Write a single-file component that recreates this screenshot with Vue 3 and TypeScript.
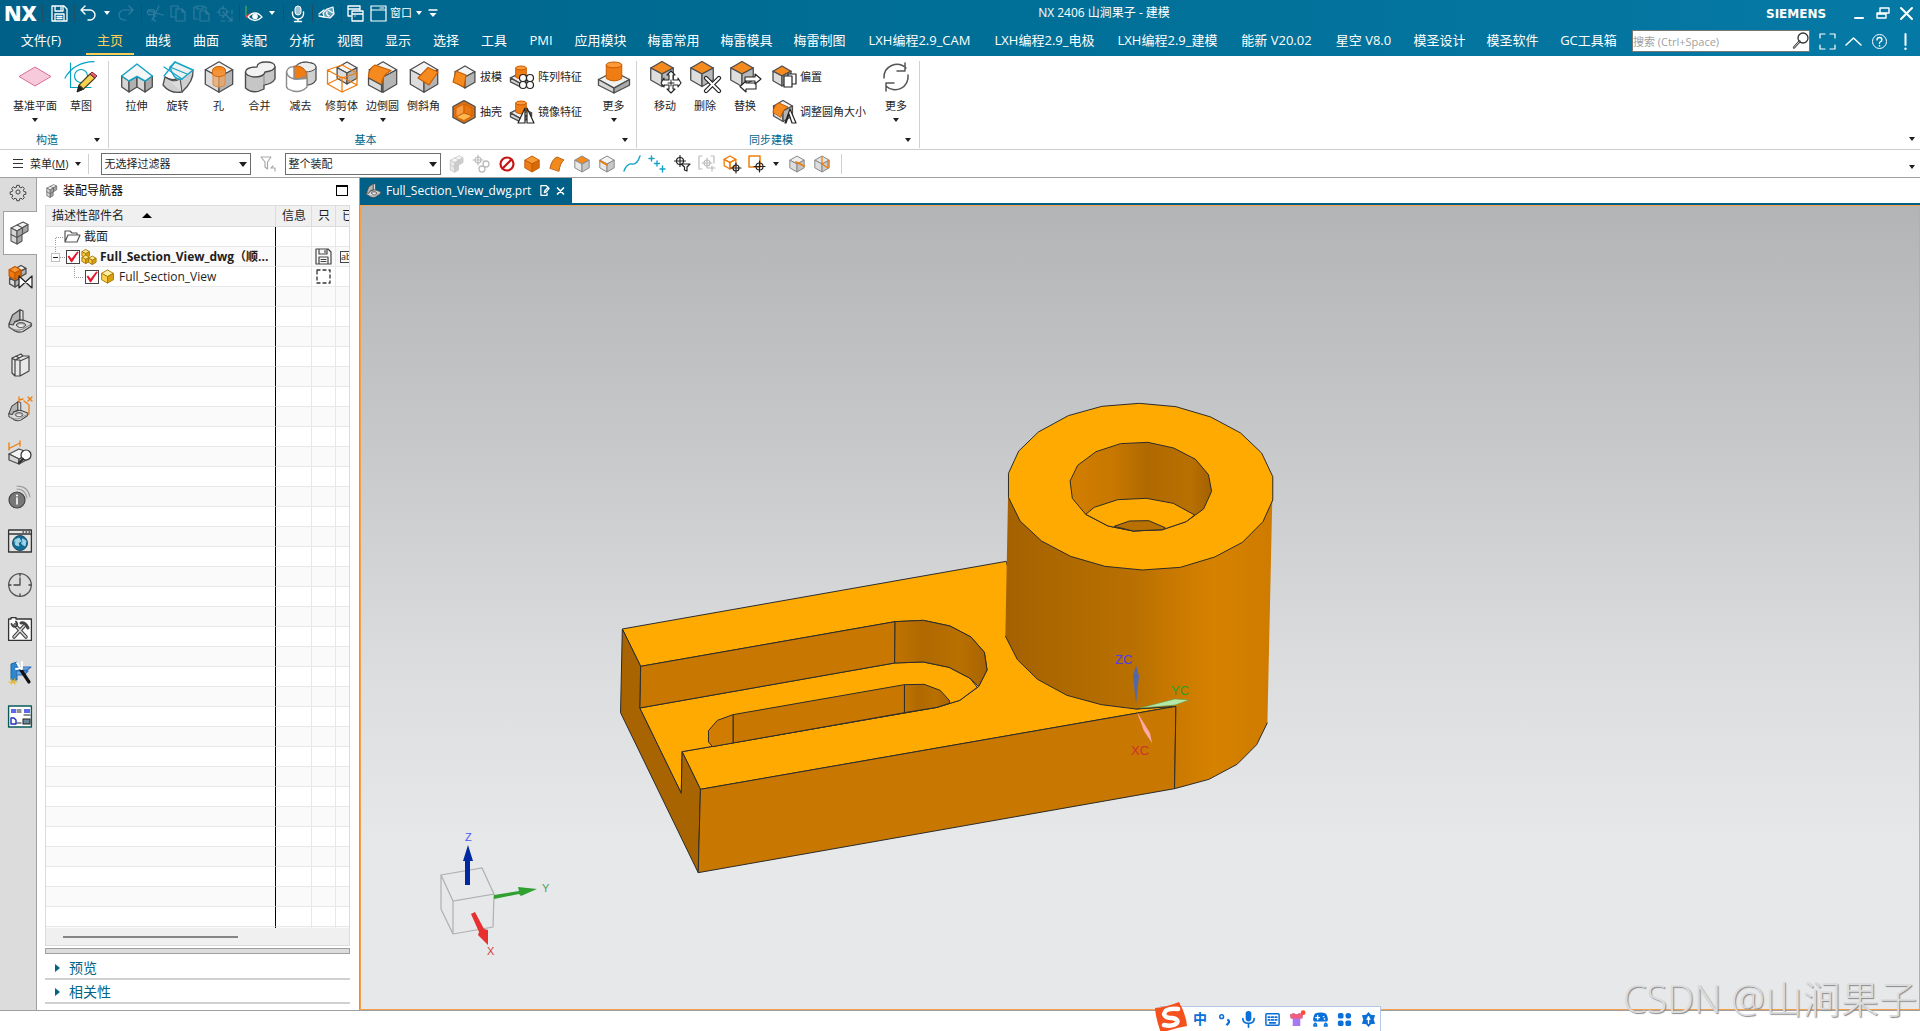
<script setup lang="ts">
import { ref } from 'vue'

/* ---------- icon drawing helpers ---------- */
const INK = '#4d4d4d'
const ORANGE = '#f58a1f'
const poly = (pts: string, fill: string, stroke = INK, w = 1.3) =>
  `<polygon points="${pts}" fill="${fill}" stroke="${stroke}" stroke-width="${w}" stroke-linejoin="round"/>`
const line = (d: string, stroke = INK, w = 1.3, fill = 'none', extra = '') =>
  `<path d="${d}" fill="${fill}" stroke="${stroke}" stroke-width="${w}" stroke-linejoin="round" stroke-linecap="round" ${extra}/>`
const cube = (
  cx: number, cy: number, r: number,
  top = '#f4f4f4', left = '#dcdcdc', right = '#b4b4b4', stroke = INK, w = 1.3
) => {
  const h = r * 0.9
  const q = r * 0.48
  return (
    poly(`${cx},${cy - r} ${cx + h},${cy - q} ${cx},${cy} ${cx - h},${cy - q}`, top, stroke, w) +
    poly(`${cx - h},${cy - q} ${cx},${cy} ${cx},${cy + r} ${cx - h},${cy + q}`, left, stroke, w) +
    poly(`${cx + h},${cy - q} ${cx},${cy} ${cx},${cy + r} ${cx + h},${cy + q}`, right, stroke, w)
  )
}
const topCube = (cx: number, cy: number, r: number) => cube(cx, cy, r, ORANGE, '#dedede', '#b8b8b8')
const boss = (cx: number, y: number, s: number) =>
  poly(`${cx - 16 * s},${y + 18 * s} ${cx},${y + 10 * s} ${cx + 16 * s},${y + 18 * s} ${cx},${y + 27 * s}`, '#f0f0f0') +
  poly(`${cx - 16 * s},${y + 18 * s} ${cx},${y + 27 * s} ${cx},${y + 32 * s} ${cx - 16 * s},${y + 24 * s}`, '#d8d8d8') +
  poly(`${cx + 16 * s},${y + 18 * s} ${cx},${y + 27 * s} ${cx},${y + 32 * s} ${cx + 16 * s},${y + 24 * s}`, '#aaaaaa') +
  line(`M${cx - 8 * s} ${y + 3 * s}V${y + 17 * s}Q${cx} ${y + 22 * s} ${cx + 8 * s} ${y + 17 * s}V${y + 3 * s}`, '#c85c00', 1, '#f07d14') +
  `<ellipse cx="${cx}" cy="${y + 3 * s}" rx="${8 * s}" ry="${3 * s}" fill="#ff9a3a" stroke="#c85c00"/>`
const target = (cx: number, cy: number, c = '#222', r = 3.5) =>
  `<circle cx="${cx}" cy="${cy}" r="${r}" fill="none" stroke="${c}" stroke-width="1.2"/>` +
  line(`M${cx - r - 2} ${cy}H${cx + r + 2}M${cx} ${cy - r - 2}V${cy + r + 2}`, c, 1.2)
/* L-shaped bracket: upright plate on a rounded base with a bore */
const bracket =
  line('M1 15L14 10.500L23 14Q24.500 16 22 18L15 22.500Q11 24 7 22L1 18Z', '#444', 1.2, '#dadada') +
  line('M1 18.500Q8 23 15 20L23.500 15', '#777', 0.9) +
  line('M1 15L4.500 6L12 .8V10.500L7 12.500L5 16Z', '#444', 1.2, '#b4b4b4') +
  line('M12 .8L15 2V11.500L12 10.500Z', '#444', 1.1, '#e4e4e4') +
  '<ellipse cx="13" cy="16" rx="4.500" ry="2.300" fill="#b8b8b8" stroke="#444"/><ellipse cx="13" cy="16.800" rx="2.600" ry="1.200" fill="#eee"/>'
/* three joined blocks in an L */
const blocks = (s: string) =>
  poly('3,7 15,1 20,3.500 9,10', '#f2f2f2', s, 1.1) + poly('3,7 9,10 9,23 3,20', '#d6d6d6', s, 1.1) +
  poly('9,10 20,3.500 20,10 14,13.500 14,20 9,23', '#a6a6a6', s, 1.1) + line('M9 4L14.500 6.700V13M3 13.500L9 16.500L14 13.500', s, 1.1)

const W = '#fff'
const DIM = '#2f7c9e'
const icons: Record<string, string> = {
  save: line('M1 1H13L16 4V16H1ZM4 1V6H12V1M4 16V9H13V16M6 11.5H11M6 13.5H11M10 2.5V4.5', W),
  undo: line('M5 1L1 5L5 9M1 5H10A5 5 0 0 1 10 15H8', W, 1.4),
  redo: line('M11 1L15 5L11 9M15 5H6A5 5 0 0 0 6 15H8', DIM, 1.2),
  cut: line('M2 6L16 10M5 15L12 1M4 5A2.5 2.5 0 1 0 4 9.5A2.5 2.5 0 1 0 4 5M9 11A2.5 2.5 0 1 0 9 16', DIM, 1.2),
  copy: line('M5 12H1V1H8V4M6 4H12L15 7V16H6ZM12 4V7H15', DIM, 1.2),
  paste: line('M5 14H1V2H4M10 2H13V5M4 1H10V4H4ZM7 6H13L16 9V16H7ZM13 6V9H16', DIM, 1.2),
  place: line('M7 1V4M7 10V13M1 7H4M10 7H13M3 7A4 4 0 1 0 11 7A4 4 0 1 0 3 7M7 7L16 16M12 16H16V12M9 16H5M16 9V5', DIM, 1.2),
  eye: line('M1 1V11', '#4caf50', 1.2) + line('M1 12L5 9', '#e53935', 1.6) +
    line('M3 12Q10 4 17 12Q10 19 3 12Z', W, 1.3) + '<circle cx="10" cy="11.5" r="2.8" fill="#fff"/>',
  mic: '<rect x="6" y="1" width="6" height="9" rx="3" fill="#9cc3d4" stroke="#fff"/>' +
    line('M3.500 7V9A5.500 5 0 0 0 14.500 9V7M9 14V16.500M5.500 16.500H12.500', W, 1.4),
  touch: line('M5 8L9 4L15 2L16 9L12 13L6 12Z', W, 1.2, '#5f9fb8') + line('M1 9L6 5M1 11L6 12M9 7Q8 10 11 11M10 5L15 8', W, 1.4),
  cascade: line('M1 1H13V5M4 11H1V1M1 4H13', W, 1.3) + line('M5 6H16V16H5ZM5 9H16M8 11H8', W, 1.3),
  frame: line('M1 1H16V16H1ZM1 5H16M10 3H14', W, 1.2),
  overflow: line('M5 5H13', W, 1.4) + '<path d="M5.500 8H12.500L9 12Z" fill="#fff"/>',
  minimize: line('M5 13H13', W, 2),
  restore: line('M6 8V3H15V8H12M3 8H12V13H3ZM3 9H12', W, 1.4),
  close: line('M3 3L14 14M14 3L3 14', W, 2),
  search: '<circle cx="11" cy="6" r="5" fill="none" stroke="#333" stroke-width="1.3"/>' + line('M7.500 9.500L2 15.500', '#333', 2.4) + line('M7 10L2 15.500', '#fff', 0.8),
  expand: line('M1 5V1H6M11 1H16V5M16 12V16H11M6 16H1V12', W, 1.2),
  up: line('M1 12L8.500 5L16 12', W, 1.5),
  help: '<circle cx="8.5" cy="8.500" r="7" fill="none" stroke="#fff"/>' + line('M6 7Q6 4.500 8.500 4.500T11 7Q11 8 8.500 9.500V10.500', W, 1.3) + '<circle cx="8.5" cy="12.8" r=".9" fill="#fff"/>',
  alert: line('M8.500 1V12', W, 2) + '<circle cx="8.5" cy="15.8" r="1.2" fill="#fff"/>',

  /* 32px ribbon icons */
  datum: poly('0,15.500 16,6 32,15.500 16,25', '#f6cadb', '#dc6c96', 1),
  sketch: line('M5.500 2V26.500H26', '#00a3c7', 1.1) + '<circle cx="16" cy="15" r="6.500" fill="none" stroke="#00a3c7" stroke-width="1.2"/>' +
    line('M0 17Q9 1 29 .6', '#00a3c7', 1.2) +
    poly('12,31 14,24 19,28', '#222', '#222', 1) + poly('14,24 25,13 30,17 18.500,28', '#f7d154', '#4a4020', 1.1) + poly('25,13 27,11 32,15 30,17', '#ef5f6b', '#7a3038', 1),
  extrude: poly('0.700,15 8,20 8,31 0.700,26', '#d6d6d6') + poly('8,20 16,15.500 16,26 8,31', '#b0b0b0') +
    poly('16,15.500 24,20 24,31 16,26', '#d6d6d6') + poly('24,20 31.300,15 31.300,26 24,31', '#a8a8a8') +
    poly('0.700,15 16,3 31.300,15 24,20 16,15.500 8,20', '#f6f6f6', '#12a5c6', 1.5),
  revolve: line('M3 16Q13 22 20 14L31 9Q32 20 20 31Q8 33 1 24Z', INK, 1.3, '#cfcfcf') + line('M3 16Q14 23 18 17L20 31', INK, 1.1, '#dcdcdc') +
    line('M8 6L13 1L31 9L20 18Q12 20 8 6Z', '#12a5c6', 1.4, '#f0f0f0') + line('M2 6L20 18M8 6L25 13M2 15L13 1', '#12a5c6', 1.3),
  hole: cube(16, 16, 15.2) + '<path d="M10 13V24Q16 28 22 24V13Z" fill="#eda663" fill-opacity=".75" stroke="#d88a45"/>' +
    '<ellipse cx="16" cy="9.500" rx="6.500" ry="4" fill="#f58a1f" stroke="#c85c00"/>' + line('M9.500 9.500V13.500Q16 18 22.500 13.500V9.500', '#d06a10', 1, '#f3933a'),
  unite: line('M1.500 11V27Q9 34 20 28V24Q28 23 31 18V6L20 11Z', INK, 1.4, '#c6c6c6') +
    line('M1.500 11Q2 6 13 6Q13 1 22 1Q31 1 31 6Q30 10 21 11Q20 16 10 16Q2 15 1.500 11Z', INK, 1.3, '#f2f2f2') + line('M20 15V24', '#8a8a8a', 1),
  subtract: line('M10 6Q16 -1 26 2Q31 3 31 7V19Q28 24 22 24L20 14Z', INK, 1.3, '#d0d0d0') + line('M10 6Q16 -1 26 2Q31 3 31 7Q28 11 20 11Z', INK, 1, '#eee') +
    line('M9 5Q20 4 22 14V24Q20 18 9 18Z', '#b85c10', 1, '#f07d14') +
    line('M1.500 11Q3 5 9 6V18Q20 18 22 17V26Q14 34 3 28L1.500 26Z', '#8c8c8c', 1.4, '#fff') + line('M1.500 11Q3 18 12 18Q20 17 22 13', '#8c8c8c', 1.3),
  trim: cube(21, 12, 11) + line('M1.500 9L16 4L31 12V24L16 31L1.500 23ZM1.500 9L16 17L31 12M16 17V31M1.500 23L16 16L31 24', '#ee7d0c', 1.3),
  blend: cube(16, 16, 15.2) + line('M1.500 15Q2 7 8 4L24 9.500Q15 14 14.500 24L1.500 17Z', '#c85c00', 1.2, ORANGE) + line('M1.500 17L14.500 24V31L1.500 24Z', INK, 1.3, '#dcdcdc'),
  chamfer: cube(16, 16, 15.2) + poly('10,17 20,6.500 30,11 21,24', ORANGE, '#c85c00', 1.2),
  boss: boss(16, 1, 0.97),
  move: topCube(13, 13, 12.5) + line('M22 10L26 14H24V19H29V17L32 22L29 26V24H24V28H26L22 32L18 28H20V24H15V26L12 22L15 17V19H20V14H18Z', '#222', 1.1, '#fff') + line('M22 19V25M19 22H25', '#222', 1),
  remove: topCube(13, 13, 12.5) + line('M17 17L30 30M30 17L17 30', '#222', 4.400) + line('M17 17L30 30M30 17L17 30', '#fff', 2),
  replace: topCube(13, 13, 12.5) + line('M16 16H26V13L32 18L26 23V20H16ZM27 22H17V20L11 25.500L17 31V28H27Z', '#222', 1.1, '#fff'),
  refresh: line('M4 17A13 13 0 0 1 26 7M25 2V10H17M28 14A13 13 0 0 1 6 25M6 30V22H14', '#555', 1.5),
  /* 24px ribbon icons */
  draft: cube(13, 12, 11) + poly('4,6 14,10 12,22 1,17', ORANGE, '#c85c00', 1.1),
  shell: poly('12,.7 23,6.500 23,17.500 12,23.300 1,17.500 1,6.500', '#dd7414', INK, 1.4) +
    poly('4,8 12,4 12,13 4,17', '#f79a40', '#c85c00', 0.8) + poly('12,4 20,8 20,16 12,13', '#e8760f', '#c85c00', 0.8) + poly('4,17 12,13 20,16 12,20.500', '#ffb84d', '#c85c00', 0.8),
  pattern: boss(11, 1, 0.66) + '<g fill="#fff" stroke="#222" stroke-width="1.2"><circle cx="13" cy="13" r="3.500"/><circle cx="20" cy="13" r="3.500"/><circle cx="13" cy="20" r="3.500"/><circle cx="20" cy="20" r="3.500"/></g>',
  mirror: boss(11, 1, 0.66) + poly('8,23 15,8 15,23', '#fff', '#222', 1.2) + poly('24,23 17,8 17,23', '#fff', '#222', 1.2),
  offset: topCube(10, 11, 10) + line('M12 11H20V22H12ZM16 11V9H24V19H20', '#222', 1.2, '#fff'),
  resize: cube(11, 11, 10.5) + line('M1 12Q2 5 7 3L16 7Q10 10 9 17Z', '#c85c00', 1, ORANGE) + line('M13 23L18 9L24 23H20L17 14L14 23Z', '#222', 1.2, '#fff'),

  /* selection bar, 18px */
  filter: line('M2 2H12L8.500 7V14L6 12V7ZM12 13H16V16M12 13L14 11', '#aaa', 1.2),
  part: '<g opacity=".55" transform="scale(.75)">' + blocks('#999') + '</g>',
  link: target(5, 5, '#bbb', 3) + '<g fill="none" stroke="#bbb" stroke-width="1.3"><circle cx="13" cy="9" r="3"/><circle cx="9" cy="14" r="3"/></g>',
  none: '<circle cx="9" cy="9" r="6.500" fill="#fff" stroke="#c81414" stroke-width="2.2"/>' + line('M4.500 13.500L13.500 4.500', '#c81414', 2.2),
  solid: cube(9, 9, 8, '#f99a33', '#f07d14', '#d96a08', '#c06010', 1),
  sheet: line('M2 13Q4 4 9 2L16 5Q12 8 11 16Z', '#c06010', 1, '#f08a1c'),
  face: cube(9, 9, 8, ORANGE, '#e8e8e8', '#c8c8c8', '#888', 1),
  edge: cube(9, 9, 8, '#f4f4f4', '#e8e8e8', '#c8c8c8', '#888', 1) + line('M2 6L9 10', '#ee7d0c', 1.8),
  curve: line('M1 16Q4 8 9 9T17 1', '#12a5c6', 1.4),
  points: line('M3.500 1V6M1 3.500H6M9 6V11M6.500 8.500H11.500M14.500 11V17M12 14H17', '#12a5c6', 1.4),
  snapf: target(7, 6, '#222', 3.5) + line('M8 9H17L14 12V16L11.500 15V12Z', '#222', 1.2, '#fff'),
  snapb: target(9, 8, '#bbb', 3) + line('M4 1H1V14H4M13 1H16V8M10 13H17M14 11V16', '#bbb', 1.2),
  boxpick: cube(7, 7.500, 6.500, 'none', 'none', 'none', '#ee7d0c', 1.3) + target(13, 13, '#222', 3),
  rectpick: line('M1 1H12V12H1Z', '#ee7d0c', 1.5) + target(11.500, 11.500, '#222', 3.5),
  mid: cube(9, 9, 8, '#eee', '#ddd', '#c4c4c4', '#888', 1) + line('M8 7L16 11', '#ee7d0c', 1.8),
  quad: cube(9, 9, 8, '#e4e4e4', '#ddd', '#ccc', '#888', 1) + line('M9 2V9L15 13V5', '#ee7d0c', 1.3),

  /* resource rail, 24px */
  gear: '<g fill="none" stroke="#444" stroke-width="1.2"><circle cx="12" cy="12" r="2.500"/><path d="M10.500 4h3l.5 2.500 1.500.6 2.100-1.400 2 2.100-1.300 2.100.6 1.500 2.500.5v2.800l-2.500.5-.6 1.500 1.300 2.100-2 2-2.100-1.300-1.500.6-.5 2.400h-3l-.5-2.400-1.500-.6-2.100 1.300-2-2 1.300-2.100-.6-1.500-2.500-.5v-2.800l2.500-.5.6-1.500-1.300-2.100 2-2.100 2.100 1.400 1.500-.6z"/></g>',
  assembly: blocks('#555'),
  constraint: cube(13, 6, 5.500) + cube(7, 16, 6) + cube(7, 8, 6.500, '#f79a3c', '#f07d14', '#d96c0a', '#c85c00') + poly('11,11 11,23 24,11 24,23', '#fff', '#222', 1.2),
  partnav: bracket,
  books: line('M4 5L13 1L15 3L21 3V18L12 23H7L4 20ZM4 5L7 7V23M7 7L15 3M12 8L21 4M12 8V23M8 3L11 5M7 7H12', '#444', 1.2, '#e8e8e8'),
  reuse: '<g transform="translate(0 4) scale(.85)">' + bracket + '</g>' + line('M11 0V5M11 3L15 2M16 4L20 7M20 0L24 4M24 0L20 4M21 8V17', '#ee7d0c', 1.3),
  measure: poly('1,13 11,8 22,12 11,18', '#f4f4f4') + poly('1,13 11,18 11,23 1,19', '#d8d8d8') + poly('22,12 11,18 11,23 22,17', '#aaa') +
    line('M1 2V9M12 0V5M2 7L12 2', '#ee7d0c', 1.3) + '<circle cx="18" cy="14" r="5" fill="#fff" stroke="#333" stroke-width="1.2"/>' + line('M15 18L11 22', '#333', 2.4),
  info: '<circle cx="9" cy="15" r="8" fill="#777" stroke="#444" stroke-width="1.2"/>' + line('M9 13V19', '#fff', 1.6) + '<circle cx="9" cy="10.500" r="1.100" fill="#fff"/>' +
    line('M9 4Q17 4 19 13M9 1Q20 1 22 12', '#999', 1.1),
  web: line('M.6 1H23.400V23H.6ZM.6 5H23.400M15 3H15.500M18 3H18.500M21 3H21.500', '#333', 1.3, '#e4e4e4') + '<circle cx="12" cy="14" r="7.500" fill="#0f6d96" stroke="#2a4e66"/>' +
    line('M7 11L11 9L13 12L10 14L11 17L8 16ZM15 10L18 12L17 17L14 15Z', '#9fd3e8', 1, '#9fd3e8'),
  clock: '<circle cx="12" cy="12" r="11.300" fill="none" stroke="#555" stroke-width="1.300"/>' + line('M12 5V12H6M12 1V3M12 21V23M1 12H3M21 12H23', '#444', 1.3),
  tools: line('M.6 2H3V.6H8V2H23.400V23.400H.6Z', '#333', 1.3, '#fff') + line('M7 8L18 20M17 8L6 20', '#444', 3.600) + line('M7 8L18 20M17 8L6 20', '#ddd', 1.4) +
    line('M13 6Q17 5 20 11', '#444', 3) + line('M3.500 7Q5 11 8.500 9Q10 7 8 4.500', '#444', 2),
  wizard: poly('3,3 9,1 9,19 3,19', '#2e86cc', '#1d65a4', 1) + line('M9 6H23L19 9H9M9 10H20L16 14H9', '#2e6fc0', 1.2, '#6aa6e0') +
    line('M13 9L21 21', '#111', 3.2) + line('M9 2L13 8M14 1V8M8 8L13 7', '#fff', 1.8) + line('M1 21H9M3 18L7 23M7 18L3 23', '#e8b418', 1.2),
  roles: line('M.6 1H23.400V22H.6Z', '#0a5a58', 1.4, '#fff') + '<rect x="3" y="4" width="5" height="4" fill="#5a6ae8"/><rect x="16" y="4" width="6" height="4" fill="#5a6ae8"/><rect x="15" y="14" width="7" height="5" fill="#6a8a9a" stroke="#222"/>' +
    line('M9 5H13M9 7H13M16 10H22M9 18H13', '#222', 1.2) + line('M3 13H6L8 15V19H3Z', '#2030c0', 1.4),

  folder: line('M1 14V3H6L8 5H13V7M1 14L4 7H16L13 14Z', '#555', 1.2, '#fff'),
  asmnode: cube(5, 5, 4.500, '#ffe680', '#f8cc3a', '#d9a010', '#a87a10', 1) + cube(5, 11, 4.500, '#ffe680', '#f8cc3a', '#d9a010', '#a87a10', 1) + cube(12, 12, 4.500, '#ffe680', '#f8cc3a', '#d9a010', '#a87a10', 1),
  partnode: cube(8, 8, 7, '#fff0a0', '#fbd44c', '#d9a010', '#a87a10', 1),
  savedark: line('M1 1H13L16 4V16H1ZM4 1V6H12V1M4 16V9H13V16M6 11.500H11M6 13.500H11M10 2.500V4.500', '#444', 1.2),
  dashed: line('M2 2H15V15H2Z', '#333', 1.3, 'none', 'stroke-dasharray="3 3"'),
  pencilpage: line('M9 1H1V15H10V12M1 1V15M4 1H9L13 5L9 10L6 11L7 8L11 4', W, 1.8),
  closetab: line('M2 3L11 12M11 3L2 12', W, 2.6),

  sgvoice: '<rect x="6" y="0" width="6" height="11" rx="3" fill="#0a6fd8"/>' + line('M3 8Q3 13 9 13T15 8M9 13V17', '#0a6fd8', 1.8),
  sgkeys: '<rect x="2" y="3" width="14" height="12" rx="1" fill="#fff" stroke="#0a6fd8" stroke-width="1.6"/>' + line('M4.500 6.500H6M8 6.500H10M12 6.500H13.500M4.500 9.500H6M8 9.500H10M12 9.500H13.500M6 12.500H12', '#0a6fd8', 1.8),
  sgskin: '<path d="M2 4L6 2Q9 5 12 2L16 4L15 8H13V16H5V8H3Z" fill="#a878f0"/><path d="M2 4L6 2Q9 5 12 2L16 4L15 8H3Z" fill="#f0607a"/><circle cx="16" cy="1.800" r="2.500" fill="#fa4a30"/>',
  sggame: '<path d="M3 3Q9 0 15 3Q18 9 16 11H2Q0 9 3 3Z" fill="#0a6fd8"/>' + line('M4 13Q2 13 2 16H5ZM14 13Q16 13 16 16H13Z', '#0a6fd8', 1.6) + line('M4 7H8M6 5V9M12 6H12.500M13 8.500H13.500', '#fff', 1.4),
  sgapps: '<g fill="#0a6fd8"><rect x="2" y="2" width="6" height="6" rx="2"/><rect x="10" y="2" width="6" height="6" rx="3"/><rect x="2" y="10" width="6" height="6" rx="2"/><rect x="10" y="10" width="6" height="6" rx="2"/></g>',
  sgset: '<path d="M9 1L11.500 4L16 4.500L14.500 9L16 13.500L11.500 14L9 17L6.500 14L2 13.500L3.500 9L2 4.500L6.500 4Z" fill="#0a6fd8"/>' + line('M9 7V13M7.500 9L9 6L10.500 9', '#fff', 1.4),
}

/* ---------- content ---------- */
const quickEdit = ['cut', 'copy', 'paste', 'place']
interface Tab { label: string; width: number }
const tabs: Tab[] = [
  ...['主页', '曲线', '曲面', '装配', '分析', '视图', '显示', '选择', '工具'].map((label) => ({ label, width: 48 })),
  { label: 'PMI', width: 46 },
  ...['应用模块', '梅雷常用', '梅雷模具', '梅雷制图'].map((label) => ({ label, width: 73 })),
  { label: 'LXH编程2.9_CAM', width: 127 },
  { label: 'LXH编程2.9_电极', width: 123 },
  { label: 'LXH编程2.9_建模', width: 123 },
  { label: '能新 V20.02', width: 95 },
  { label: '星空 V8.0', width: 79 },
  { label: '模圣设计', width: 73 },
  { label: '模圣软件', width: 73 },
  { label: 'GC工具箱', width: 79 },
]
const activeTab = ref('主页')

interface Tool { icon: string; label: string; menu?: boolean }
const basicTools: Tool[] = [
  { icon: 'extrude', label: '拉伸' },
  { icon: 'revolve', label: '旋转' },
  { icon: 'hole', label: '孔' },
  { icon: 'unite', label: '合并' },
  { icon: 'subtract', label: '减去' },
  { icon: 'trim', label: '修剪体', menu: true },
  { icon: 'blend', label: '边倒圆', menu: true },
  { icon: 'chamfer', label: '倒斜角' },
]
const basicPairs: Tool[][] = [
  [{ icon: 'draft', label: '拔模' }, { icon: 'shell', label: '抽壳' }],
  [{ icon: 'pattern', label: '阵列特征' }, { icon: 'mirror', label: '镜像特征' }],
]
const syncTools: Tool[] = [
  { icon: 'move', label: '移动' },
  { icon: 'remove', label: '删除' },
  { icon: 'replace', label: '替换' },
]
const syncPair: Tool[] = [{ icon: 'offset', label: '偏置' }, { icon: 'resize', label: '调整圆角大小' }]
const pickIcons = ['part', 'link', 'none', 'solid', 'sheet', 'face', 'edge', 'curve', 'points', 'snapf', 'snapb', 'boxpick', 'rectpick']
const railIcons = ['assembly', 'constraint', 'partnav', 'books', 'reuse', 'measure', 'info', 'web', 'clock', 'tools', 'wizard', 'roles']
const activeRail = ref('assembly')
const imeIcons = ['sgvoice', 'sgkeys', 'sgskin', 'sggame', 'sgapps', 'sgset']
const blankRows = 33
const rootShown = ref(true)
const childShown = ref(true)
</script>

<template>
  <div class="app">
    <header class="banner">
      <div class="titlebar">
        <strong class="nx">NX</strong>
        <i class="tsep"></i>
        <button class="q" aria-label="保存"><svg viewBox="0 0 17 17" v-html="icons.save" /></button>
        <i class="tsep"></i>
        <button class="q" aria-label="撤销"><svg viewBox="0 0 17 17" v-html="icons.undo" /></button>
        <i class="caret light"></i>
        <button class="q" aria-label="重做"><svg viewBox="0 0 17 17" v-html="icons.redo" /></button>
        <i class="tsep"></i>
        <button v-for="n in quickEdit" :key="n" class="q" :aria-label="n"><svg viewBox="0 0 17 17" v-html="icons[n]" /></button>
        <i class="tsep"></i>
        <button class="q" aria-label="视图"><svg viewBox="0 0 17 17" v-html="icons.eye" /></button>
        <i class="caret light"></i>
        <i class="tsep"></i>
        <button class="q" aria-label="语音"><svg viewBox="0 0 17 17" v-html="icons.mic" /></button>
        <i class="tsep"></i>
        <button class="q" aria-label="触控"><svg viewBox="0 0 17 17" v-html="icons.touch" /></button>
        <i class="tsep"></i>
        <button class="q" aria-label="层叠"><svg viewBox="0 0 17 17" v-html="icons.cascade" /></button>
        <button class="q window"><svg viewBox="0 0 17 17" v-html="icons.frame" />窗口<i class="caret light"></i></button>
        <button class="q more" aria-label="自定义"><svg viewBox="0 0 17 17" v-html="icons.overflow" /></button>
        <h1>NX 2406 山涧果子 - 建模</h1>
        <strong class="brand">SIEMENS</strong>
        <button class="q win" aria-label="最小化"><svg viewBox="0 0 17 17" v-html="icons.minimize" /></button>
        <button class="q win" aria-label="还原"><svg viewBox="0 0 17 17" v-html="icons.restore" /></button>
        <button class="q win" aria-label="关闭"><svg viewBox="0 0 17 17" v-html="icons.close" /></button>
      </div>
      <nav class="menubar">
        <button class="tab file">文件(F)</button>
        <button v-for="t in tabs" :key="t.label" class="tab" :class="{ on: t.label === activeTab }" :style="{ width: t.width + 'px' }" @click="activeTab = t.label">{{ t.label }}</button>
        <div class="find">
          <input type="text" aria-label="搜索" placeholder="搜索 (Ctrl+Space)" />
          <svg viewBox="0 0 17 17" v-html="icons.search" />
        </div>
        <button v-for="n in ['expand', 'up', 'help', 'alert']" :key="n" class="q side" :aria-label="n"><svg viewBox="0 0 17 17" v-html="icons[n]" /></button>
      </nav>
    </header>

    <section class="ribbon">
      <div class="group">
        <div class="tools first">
          <button class="tool wide"><svg viewBox="0 0 32 32" v-html="icons.datum" /><span>基准平面</span><i class="caret"></i></button>
          <button class="tool slim"><svg viewBox="0 0 32 32" v-html="icons.sketch" /><span>草图</span></button>
        </div>
        <div class="caption"><span>构造</span><i class="caret"></i></div>
      </div>
      <div class="group">
        <div class="tools">
          <button v-for="t in basicTools" :key="t.label" class="tool">
            <svg viewBox="0 0 32 32" v-html="icons[t.icon]" /><span>{{ t.label }}</span><i v-if="t.menu" class="caret"></i>
          </button>
          <div v-for="(pair, i) in basicPairs" :key="i" class="pair">
            <button v-for="t in pair" :key="t.label"><svg viewBox="0 0 24 24" v-html="icons[t.icon]" />{{ t.label }}</button>
          </div>
          <button class="tool"><svg viewBox="0 0 32 32" v-html="icons.boss" /><span>更多</span><i class="caret"></i></button>
        </div>
        <div class="caption"><span>基本</span><i class="caret"></i></div>
      </div>
      <div class="group sync">
        <div class="tools">
          <button v-for="t in syncTools" :key="t.label" class="tool"><svg viewBox="0 0 32 32" v-html="icons[t.icon]" /><span>{{ t.label }}</span></button>
          <div class="pair">
            <button v-for="t in syncPair" :key="t.label"><svg viewBox="0 0 24 24" v-html="icons[t.icon]" />{{ t.label }}</button>
          </div>
          <button class="tool"><svg viewBox="0 0 32 32" v-html="icons.refresh" /><span>更多</span><i class="caret"></i></button>
        </div>
        <div class="caption"><span>同步建模</span><i class="caret"></i></div>
      </div>
      <i class="caret corner"></i>
    </section>

    <section class="selbar">
      <button class="menu"><i class="burger"></i><span>菜单(<u>M</u>)</span><i class="caret"></i></button>
      <i class="vsep"></i>
      <div class="pick"><select aria-label="选择过滤器"><option>无选择过滤器</option></select><i class="caret big"></i></div>
      <button class="s" aria-label="重置"><svg viewBox="0 0 18 18" v-html="icons.filter" /></button>
      <div class="pick scope"><select aria-label="选择范围"><option>整个装配</option></select><i class="caret big"></i></div>
      <div class="picks">
        <button v-for="n in pickIcons" :key="n" class="s" :aria-label="n"><svg viewBox="0 0 18 18" v-html="icons[n]" /></button>
        <i class="caret"></i>
        <button class="s" aria-label="中点"><svg viewBox="0 0 18 18" v-html="icons.mid" /></button>
        <button class="s" aria-label="象限点"><svg viewBox="0 0 18 18" v-html="icons.quad" /></button>
      </div>
      <i class="vsep"></i>
      <i class="caret corner"></i>
    </section>

    <main class="work">
      <nav class="rail">
        <button class="cog" aria-label="设置"><svg viewBox="0 0 24 24" v-html="icons.gear" /></button>
        <button v-for="n in railIcons" :key="n" :class="{ on: n === activeRail }" :aria-label="n" @click="activeRail = n">
          <svg viewBox="0 0 24 24" v-html="icons[n]" />
        </button>
      </nav>

      <aside class="panel">
        <div class="head">
          <svg viewBox="0 0 24 24" v-html="icons.assembly" />
          <h2>装配导航器</h2>
          <button class="max" aria-label="最大化"></button>
        </div>
        <div class="grid">
          <div class="rows">
            <table>
              <colgroup><col /><col class="c-info" /><col class="c-ro" /><col class="c-mod" /></colgroup>
              <thead>
                <tr><th class="name">描述性部件名<i class="sort"></i></th><th>信息</th><th>只</th><th>已</th></tr>
              </thead>
              <tbody>
                <tr>
                  <td><div class="node"><svg class="l1" viewBox="0 0 18 20"><path d="M9.500 20V10.500H18" /></svg><svg class="ic" viewBox="0 0 17 17" v-html="icons.folder" /><span>截面</span></div></td>
                  <td></td><td></td><td></td>
                </tr>
                <tr>
                  <td><div class="node root"><svg class="l2" viewBox="0 0 20 20"><path d="M9.500 0V6M14 10.500H19" /><rect x="5.500" y="6.500" width="8" height="8" /><path class="minus" d="M7 10.500H12" /></svg><input v-model="rootShown" type="checkbox" aria-label="Full_Section_View_dwg" /><svg class="ic" viewBox="0 0 17 17" v-html="icons.asmnode" /><b>Full_Section_View_dwg（顺...</b></div></td>
                  <td></td>
                  <td class="mark"><svg viewBox="0 0 17 17" v-html="icons.savedark" /></td>
                  <td class="mark"><span class="ab">ab</span></td>
                </tr>
                <tr>
                  <td><div class="node child"><svg class="l3" viewBox="0 0 39 20"><path d="M28.500 0V10.500H38" /></svg><input v-model="childShown" type="checkbox" aria-label="Full_Section_View" /><svg class="ic" viewBox="0 0 17 17" v-html="icons.partnode" /><span>Full_Section_View</span></div></td>
                  <td></td>
                  <td class="mark"><svg viewBox="0 0 17 17" v-html="icons.dashed" /></td>
                  <td></td>
                </tr>
                <tr v-for="n in blankRows" :key="n"><td></td><td></td><td></td><td></td></tr>
              </tbody>
            </table>
          </div>
          <div class="hscroll"><i></i></div>
        </div>
        <div class="splitter"></div>
        <button class="fold"><i></i>预览</button>
        <button class="fold"><i></i>相关性</button>
      </aside>

      <section class="stage">
        <div class="docs">
          <div class="doc">
            <svg class="dic" viewBox="0 0 24 24" v-html="icons.partnav" />
            <span>Full_Section_View_dwg.prt</span>
            <svg class="dpen" viewBox="0 0 14 16" v-html="icons.pencilpage" />
            <button aria-label="关闭"><svg viewBox="0 0 13 15" v-html="icons.closetab" /></button>
          </div>
        </div>
        <div class="canvas">
          <svg class="scene" viewBox="361 206 1558 803">
            <defs>
              <linearGradient id="wall" x1="907" x2="1507" y1="0" y2="0" gradientUnits="userSpaceOnUse">
                <stop offset="0" stop-color="#a46100" /><stop offset=".2" stop-color="#ad6800" /><stop offset=".48" stop-color="#b87000" />
                <stop offset=".6" stop-color="#c67700" /><stop offset=".78" stop-color="#d68200" /><stop offset="1" stop-color="#ce7b00" />
              </linearGradient>
              <linearGradient id="bore"><stop offset="0" stop-color="#d27e00" /><stop offset=".3" stop-color="#c87800" /><stop offset=".55" stop-color="#b06900" /><stop offset=".85" stop-color="#b87000" /><stop offset="1" stop-color="#a46100" /></linearGradient>
              <linearGradient id="turn"><stop offset="0" stop-color="#c07300" /><stop offset=".3" stop-color="#b06900" /><stop offset=".7" stop-color="#b87000" /><stop offset="1" stop-color="#a86400" /></linearGradient>
            </defs>
            <g class="solid" transform="translate(600 380) scale(.446429 .333333)">
              <polygon fill="#ffaa00" points="50,747 910,544 940,700 1200,987 1290,979 225,1228 184,1115 755,982 806,961 848,920 867,870 861,817 831,771 784,738 724,721 661,725 91,859" />
              <polygon fill="#ffaa00" points="89,984 660,849 724,846 782,862 829,895 845,922 806,961 755,982 184,1115 182,1240" />
              <polygon fill="#c87800" points="91,859 661,725 660,849 89,984" />
              <polygon fill="url(#turn)" points="661,725 724,721 784,738 831,771 861,817 867,870 848,920 829,895 782,862 724,846 660,849" />
              <polygon fill="#c87800" points="298,1004 682,914 682,998 298,1089" />
              <polygon fill="url(#turn)" points="682,914 726,913 762,931 783,962 783,970 755,982 682,998" />
              <polygon fill="#cf7c00" points="298,1004 263,1021 243,1052 243,1086 252,1100 298,1089" />
              <polygon fill="#a86400" points="50,747 91,859 89,984 182,1240 184,1115 225,1228 220,1478 46,998" />
              <polygon fill="#c87800" points="225,1228 1290,979 1287,1226 220,1478" />
              <polygon fill="url(#wall)" stroke="none" points="915,280 908,768 935,839 980,898 1046,946 1123,974 1200,987 1290,979 1287,1226 1364,1198 1427,1153 1471,1094 1495,1028 1507,290" />
              <polyline fill="none" points="908,768 935,839 980,898 1046,946 1123,974 1200,987 1290,979 1287,1226 1364,1198 1427,1153 1471,1094 1495,1028" />
              <polygon fill="#ffaa00" points="1208,70 1290,80 1368,111 1435,159 1482,219 1507,290 1507,360 1485,425 1439,487 1377,531 1300,562 1215,570 1131,559 1054,529 989,483 941,423 915,352 915,280 938,213 982,156 1049,107 1124,79" />
              <polygon fill="url(#bore)" points="1053,303 1070,256 1111,215 1166,191 1227,187 1285,204 1334,238 1363,284 1370,334 1352,387 1313,425 1260,449 1194,453 1138,438 1088,403 1058,355" />
              <polygon fill="#ffaa00" points="1088,403 1107,382 1160,359 1224,355 1284,370 1332,405 1313,425 1260,449 1194,453 1138,438" />
              <polygon fill="#b87000" points="1152,439 1186,423 1229,422 1266,443 1260,449 1194,453" />
            </g>
            <g class="wcs">
              <polygon fill="#5468a8" points="1136,665 1139,676 1136,704 1133,676" />
              <polygon fill="#b4e8a8" stroke="#5a9a50" stroke-width=".5" points="1140,708 1175,699 1189,700 1175,705" />
              <polygon fill="#ffaaa8" points="1137,712 1150,733 1152,743 1144,731" />
              <text x="1115" y="664" fill="#4a3cf0">ZC</text>
              <text x="1171" y="695" fill="#28a028">YC</text>
              <text x="1131" y="755" fill="#d03030">XC</text>
            </g>
            <g class="triad">
              <path d="M441 875L482 868L494 894L453 901ZM441 875V909L453 934V901M453 934L493 927L494 894" fill="none" stroke="#b0b0b0" stroke-width="1.2" />
              <path d="M465 885V861H463L468 845L473 861H470V885Z" fill="#0028a0" />
              <path d="M494 895L519 891L518 887L537 889L521 896L519 894L494 899Z" fill="#30a030" />
              <path d="M471 914L475 912L484 929L488 930L488 945L478 935L479 932Z" fill="#e83030" />
              <text x="465" y="841" fill="#4a5cf0">Z</text>
              <text x="542" y="892" fill="#50a050">Y</text>
              <text x="487" y="955" fill="#d83838">X</text>
            </g>
          </svg>
        </div>
      </section>
    </main>

    <footer class="foot"></footer>

    <div class="watermark">CSDN @山涧果子</div>
    <div class="ime">
      <svg class="logo" viewBox="0 0 32 30"><path d="M0 6Q12 5 24 0Q31 12 32 24Q20 26 6 31Q1 18 0 6Z" fill="#f4511e" /><path d="M23 7Q10 6 9 12Q10 16 17 16Q24 17 22 21Q18 25 9 23" fill="none" stroke="#fff" stroke-width="4.500" stroke-linecap="round" /></svg>
      <button class="cn">中</button>
      <button class="cn" aria-label="标点"><svg viewBox="0 0 18 18"><circle cx="6" cy="6" r="2" fill="none" stroke="#0a6fd8" stroke-width="1.600" /><path d="M12 9Q16 11 11 15" fill="none" stroke="#0a6fd8" stroke-width="2.500" /></svg></button>
      <button v-for="n in imeIcons" :key="n" :aria-label="n"><svg viewBox="0 0 18 18" v-html="icons[n]" /></button>
    </div>
  </div>
</template>

<style>
body { margin: 0; background: #fff; }
</style>

<style scoped>
.app { position: relative; display: flex; flex-direction: column; height: 100vh; overflow: hidden; background: #fff; color: #1e1e1e; font: 11px/16px "Open Sans", "Noto Sans CJK SC", sans-serif; }
.app * { box-sizing: border-box; }
button { display: flex; align-items: center; justify-content: center; flex: none; margin: 0; padding: 0; border: 0; background: none; color: inherit; font: inherit; white-space: nowrap; }
svg { flex: none; display: block; overflow: visible; }
i { flex: none; }
.caret { width: 0; height: 0; border: 3px solid transparent; border-top: 4px solid #1e1e1e; border-bottom: 0; }
.caret.light { border-top-color: #fff; }
.caret.big { border-width: 5px 4px 0; }

.banner { flex: none; background: linear-gradient(90deg, #006087, #006e95 45%, #0579a5); color: #fff; }
.titlebar { display: flex; align-items: center; height: 26px; padding: 0 2px 0 4px; }
.nx { width: 35px; font-size: 21px; font-weight: 800; line-height: 26px; }
.tsep { width: 1px; height: 18px; margin: 0 2px 0 3px; background: #1b4f66; }
.nx + .tsep { margin-right: 5px; }
.q { width: 23px; height: 24px; }
.q svg { width: 17px; height: 17px; }
.titlebar > .caret { margin: 0 5px 0 4px; }
.q.window { width: auto; gap: 3px; padding-left: 3px; }
.q.window .caret { margin-left: 1px; }
.q.more { width: 20px; }
h1 { flex: 1; margin: 0; text-align: center; font-size: 12px; font-weight: 400; }
.brand { width: 80px; padding-top: 2px; font: bold 12px/16px "DejaVu Sans", sans-serif; }
.q.win { width: 24px; }
.menubar { display: flex; align-items: center; height: 30px; padding-right: 2px; }
.tab { height: 28px; font-size: 13px; border-bottom: 2px solid transparent; }
.tab.file { width: 82px; margin-right: 4px; }
.tab.on { color: #ffce54; border-color: #ffce54; }
.find { position: relative; display: flex; width: 178px; height: 22px; margin: 0 4px 0 auto; }
.find input { width: 100%; padding: 0 24px 0 0; border: 1px solid #777; background: #fff; font: 11px "Open Sans", "Noto Sans CJK SC", sans-serif; }
.find input::placeholder { color: #a0a0a0; }
.find svg { position: absolute; right: 1px; top: 2px; width: 17px; height: 17px; }
.q.side { width: 26px; }

.ribbon { position: relative; display: flex; flex: none; height: 94px; padding: 5px 0 1px; border-bottom: 1px solid #ccc; }
.group { display: flex; flex-direction: column; gap: 3px; border-right: 1px solid #d0d0d0; }
.tools { display: flex; flex: none; height: 68px; padding: 0 2px 0 7px; }
.tools.first { padding: 0 9px 0 7px; }
.tool { flex-direction: column; justify-content: flex-start; width: 41px; }
.tool svg { width: 32px; height: 32px; }
.tool span { margin: 5px 0 4px; }
.tool.wide { width: 56px; }
.tool.slim { width: 36px; }
.sync .tools { padding-left: 8px; }
.sync .tool { width: 40px; }
.pair { display: flex; flex-direction: column; gap: 11px; padding: 4px 1px 0 7px; }
.tool + .pair { margin-left: 1px; }
.sync .tool + .pair { margin-left: 0; }
.pair button { justify-content: flex-start; gap: 4px; height: 24px; }
.pair svg { width: 24px; height: 24px; }
.pair + .tool { margin-left: 10px; }
.sync .pair + .tool { margin: 0 1px 0 9px; }
.caption { display: flex; align-items: center; flex: none; height: 16px; padding-right: 8px; color: #006487; }
.caption span { flex: 1; text-align: center; }
.corner { position: absolute; right: 5px; bottom: 8px; }

.selbar { position: relative; display: flex; align-items: center; flex: none; height: 28px; border-bottom: 1px solid #a0a0a0; }
.menu { gap: 7px; padding-left: 13px; }
.menu .caret { border-width: 4px 3px 0; }
.burger { width: 10px; height: 9px; border: solid #333; border-width: 1px 0; background: linear-gradient(#333, #333) 0 3px / 10px 1px no-repeat; }
.vsep { width: 1px; height: 20px; margin: 0 12px 0 7px; background: #d0d0d0; }
.pick { position: relative; width: 150px; height: 22px; }
.pick.scope { width: 156px; }
.pick select { appearance: none; width: 100%; height: 100%; padding: 0 2px; border: 1px solid #6e6e6e; border-radius: 0; background: #fff; color: #1e1e1e; font: 11px "Open Sans", "Noto Sans CJK SC", sans-serif; }
.pick .caret { position: absolute; right: 4px; top: 9px; }
.s { width: 25px; height: 22px; }
.s svg { width: 18px; height: 18px; }
.pick + .s { width: 34px; }
.picks { display: flex; align-items: center; padding-left: 3px; }
.picks .caret { margin: 0 5px 0 4px; }

.work { display: flex; flex: 1; min-height: 0; border-bottom: 1px solid #a0a0a0; }
.rail { display: flex; flex-direction: column; width: 37px; background: #dcdcdc; border-right: 1px solid #a0a0a0; }
.rail button { width: 37px; height: 44px; padding-left: 2px; }
.rail svg { width: 24px; height: 24px; }
.rail .cog { height: 33px; padding: 0 1px 5px 0; }
.rail .cog svg { width: 20px; height: 20px; }
.rail .on { width: 34px; margin-left: 3px; padding: 0 2px 0 0; background: #fff; border: 1px solid #a0a0a0; border-right: 0; }

.panel { display: flex; flex-direction: column; width: 322px; padding: 0 9px 6px 8px; }
.head { display: flex; align-items: center; height: 27px; padding-bottom: 2px; }
.head svg { width: 14px; height: 14px; }
h2 { flex: 1; margin: 0 0 0 4px; font-size: 12px; font-weight: 400; color: #000; }
.max { width: 12px; height: 11px; margin-right: 2px; border: 1px solid #000; border-top-width: 2px; }
.grid { display: flex; flex-direction: column; flex: 1; min-height: 0; border: 1px solid #dcdcdc; }
.rows { flex: 1; min-height: 0; overflow: hidden; }
table { width: 100%; table-layout: fixed; border-collapse: separate; border-spacing: 0; font-size: 12px; }
.c-info { width: 36px; }
.c-ro { width: 24px; }
.c-mod { width: 13px; }
th { height: 21px; padding: 0 0 0 6px; overflow: hidden; border: solid #dcdcdc; border-width: 0 1px 1px 0; background: #f0f0f0; text-align: left; font-weight: 400; white-space: nowrap; }
th:last-child, td:last-child { border-right: 0; }
.sort { display: inline-block; margin: 0 0 2px 18px; border: 5px solid transparent; border-top: 0; border-bottom: 5px solid #000; }
td { height: 20px; padding: 0; overflow: hidden; border: solid #e8e8e8; border-width: 0 1px 1px 0; }
td:first-child { border-right-color: #000; }
tbody tr:nth-child(even) { background: #fafafa; }
.node { display: flex; align-items: center; height: 19px; white-space: nowrap; overflow: hidden; }
.node span { margin-left: 3px; }
.node b { margin-left: 3px; font-weight: 700; }
.l1 { width: 18px; height: 20px; }
.l2 { width: 20px; height: 20px; }
.l3 { width: 39px; height: 20px; }
.l1 path, .l2 path, .l3 path { fill: none; stroke: #999; stroke-dasharray: 1 1; }
.l2 rect { fill: #fff; stroke: #c0c0c0; }
.l2 .minus { stroke: #222; stroke-dasharray: none; }
.ic { width: 17px; height: 17px; }
.child .ic, .root .ic { width: 16px; height: 16px; }
.node input { position: relative; appearance: none; flex: none; width: 14px; height: 14px; margin: 0 1px 0 0; border: 1px solid #444; background: #fff; }
.node input:checked::before { content: ""; position: absolute; inset: 0; background: #e8142c; clip-path: polygon(5% 50%, 18% 42%, 38% 68%, 85% 8%, 98% 12%, 42% 98%, 34% 98%); }
.mark svg { width: 17px; height: 17px; margin: 0 auto; }
.ab { display: block; width: 18px; height: 12px; margin-left: 4px; border: 1px solid #444; font-size: 9px; line-height: 10px; }
.hscroll { flex: none; height: 17px; padding: 8px 0 0 17px; background: #f0f0f0; }
.hscroll i { display: block; width: 175px; height: 2px; background: #858585; }
.splitter { flex: none; height: 6px; margin: 2px 0; background: #dcdcdc; border: 1px solid #a0a0a0; }
.fold { justify-content: flex-start; gap: 9px; height: 24px; padding: 2px 0 0 10px; border-bottom: 2px solid #d0d0d0; color: #006487; font-size: 14px; }
.fold i { border: 4px solid transparent; border-left: 5px solid #006487; border-right: 0; }

.stage { display: flex; flex-direction: column; flex: 1; min-width: 0; border-left: 1px solid #a0a0a0; }
.docs { display: flex; flex: none; height: 27px; border-bottom: 2px solid #006087; }
.doc { display: flex; align-items: center; padding: 0 7px 0 6px; background: #006087; color: #fff; font-size: 12px; }
.dic { width: 15px; height: 15px; margin-right: 5px; }
.dpen { width: 10px; height: 11px; margin: 0 6px 0 9px; }
.doc button svg { width: 9px; height: 10px; }
.canvas { flex: 1; min-height: 0; border: 1px solid #f5a04a; background: linear-gradient(#b3b4b6, #c6c7c9 28%, #dcddde 58%, #e6e8ea 80%, #e6e8ea); }
.scene { width: 100%; height: 100%; }
.solid > * { stroke: #2c2c2c; stroke-width: 1px; vector-effect: non-scaling-stroke; stroke-linejoin: round; }
.solid > [stroke="none"] { stroke: none; }
.wcs text, .triad text { font: 13px "Liberation Sans", sans-serif; }
.triad text { font-size: 11px; }
.foot { flex: none; height: 20px; }

.watermark { position: absolute; right: 3px; bottom: 9px; color: #dcdcde; font-size: 38px; font-weight: 300; line-height: 48px; text-shadow: 1px 1px 1px #888; }
.ime { position: absolute; left: 1160px; bottom: 0; display: flex; align-items: center; height: 25px; width: 221px; padding-left: 28px; background: #fff; border: solid #b4c8e8; border-width: 1px 1px 0 0; }
.ime button { width: 24px; height: 24px; color: #0a6fd8; }
.ime .cn { font-size: 14px; font-weight: 700; }
.ime svg { width: 17px; height: 17px; }
.ime .logo { position: absolute; left: -5px; top: -5px; width: 32px; height: 30px; }
</style>
